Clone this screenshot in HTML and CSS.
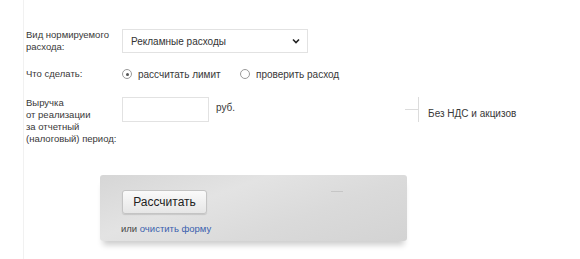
FILE: index.html
```html
<!DOCTYPE html>
<html lang="ru">
  <head>
    <meta charset="UTF-8" />
    <title>Расчет норматива</title>
    <link rel="stylesheet" href="styles.css">
  </head>
  <body>
    <div class="page">
      <form class="calc">
        <div class="row row-type">
          <label class="label">Вид нормируемого<br>расхода:</label>
          <div class="field">
            <div class="select">
              <span>Рекламные расходы</span>
              <svg class="chevron" width="8" height="6" viewBox="0 0 8 6">
                <path d="M1 1.5 L4 4.5 L7 1.5" fill="none" stroke="#222" stroke-width="1.6"/>
              </svg>
            </div>
          </div>
        </div>

        <div class="row row-action">
          <span class="label">Что сделать:</span>
          <div class="field radios">
            <label class="radio"><span class="dot checked"></span>рассчитать лимит</label>
            <label class="radio"><span class="dot"></span>проверить расход</label>
          </div>
        </div>

        <div class="row row-revenue">
          <label class="label">Выручка<br>от реализации<br>за отчетный<br>(налоговый) период:</label>
          <div class="field inline">
            <div class="input"></div>
            <span class="unit">руб.</span>
            <div class="hint">
              <span class="hint-mark"></span>
              <span class="hint-text">Без НДС и акцизов</span>
            </div>
          </div>
        </div>

        <div class="panel">
          <div class="panel-top">
            <button type="button" class="btn">Рассчитать</button>
            <span class="dash"></span>
          </div>
          <p class="reset">или <a href="#">очистить форму</a></p>
        </div>
      </form>
    </div>
  </body>
</html>
```

FILE: styles.css
```css
body {
  margin: 0;
  background: #fff;
  color: #383838;
  font-family: "Liberation Sans", Arial, sans-serif;
  font-size: 9.5px;
}
.page {
  margin-left: 23px;
  border-left: 1px solid #f1f1f1;
  min-height: 259px;
  padding-left: 2px;
}
.calc {
  padding-top: 29px;
}
.row {
  display: grid;
  grid-template-columns: 96px auto;
}
.label {
  line-height: 12px;
}
.select {
  width: 169px;
  height: 22px;
  border: 1px solid #e2e2e2;
  display: flex;
  align-items: center;
  justify-content: space-between;
  padding: 0 7px 0 8px;
  font-size: 10px;
  color: #333;
}
.chevron {
  display: block;
}
.row-action {
  margin-top: 15px;
  align-items: center;
  height: 12px;
}
.radios {
  display: flex;
}
.radio {
  display: flex;
  align-items: center;
  gap: 6px;
  font-size: 10px;
}
.radio:first-child {
  width: 118px;
}
.dot {
  width: 10px;
  height: 10px;
  border: 1px solid #9a9a9a;
  border-radius: 50%;
  box-sizing: border-box;
  position: relative;
}
.dot.checked::after {
  content: "";
  position: absolute;
  left: 2.5px;
  top: 2.5px;
  width: 3px;
  height: 3px;
  border-radius: 50%;
  background: #555;
}
.row-revenue {
  margin-top: 17px;
}
.inline {
  display: flex;
  align-items: flex-start;
}
.input {
  width: 85px;
  height: 23px;
  border: 1px solid #e2e2e2;
}
.unit {
  margin-left: 7px;
  margin-top: 5px;
  font-size: 10px;
}
.hint {
  display: flex;
  align-items: center;
  margin-left: 170px;
  height: 25px;
}
.hint-mark {
  width: 13px;
  height: 25px;
  border-right: 1px solid #dcdcdc;
  position: relative;
}
.hint-mark::before {
  content: "";
  position: absolute;
  left: 0;
  right: 0;
  top: 12px;
  border-top: 1px solid #dcdcdc;
}
.hint-text {
  margin-left: 9px;
  margin-top: 8px;
  font-size: 10px;
}
.panel {
  margin: 30px 0 0 74px;
  width: 307px;
  height: 66px;
  box-sizing: border-box;
  padding: 15px 0 0 22px;
  border-radius: 3px;
  background: linear-gradient(160deg, #d6d6d6 0%, #e3e3e3 35%, #dadada 65%, #d3d3d3 100%);
  box-shadow: 0 7px 6px -3px rgba(0, 0, 0, 0.2);
}
.panel-top {
  display: flex;
  align-items: flex-start;
}
.btn {
  width: 85px;
  height: 24px;
  border: 1px solid #c4c4c4;
  border-radius: 3px;
  background: linear-gradient(#fafafa, #e6e6e6);
  box-shadow: 0 1px 1px rgba(0, 0, 0, 0.12);
  font-family: inherit;
  font-size: 12px;
  color: #222;
  padding: 0;
}
.dash {
  width: 12px;
  height: 1px;
  background: #c6c6c6;
  margin: 1px 0 0 124px;
}
.reset {
  margin: 9px 0 0 -1px;
  font-size: 9.5px;
  color: #444;
}
.reset a {
  color: #3a5fae;
  text-decoration: none;
}
```
